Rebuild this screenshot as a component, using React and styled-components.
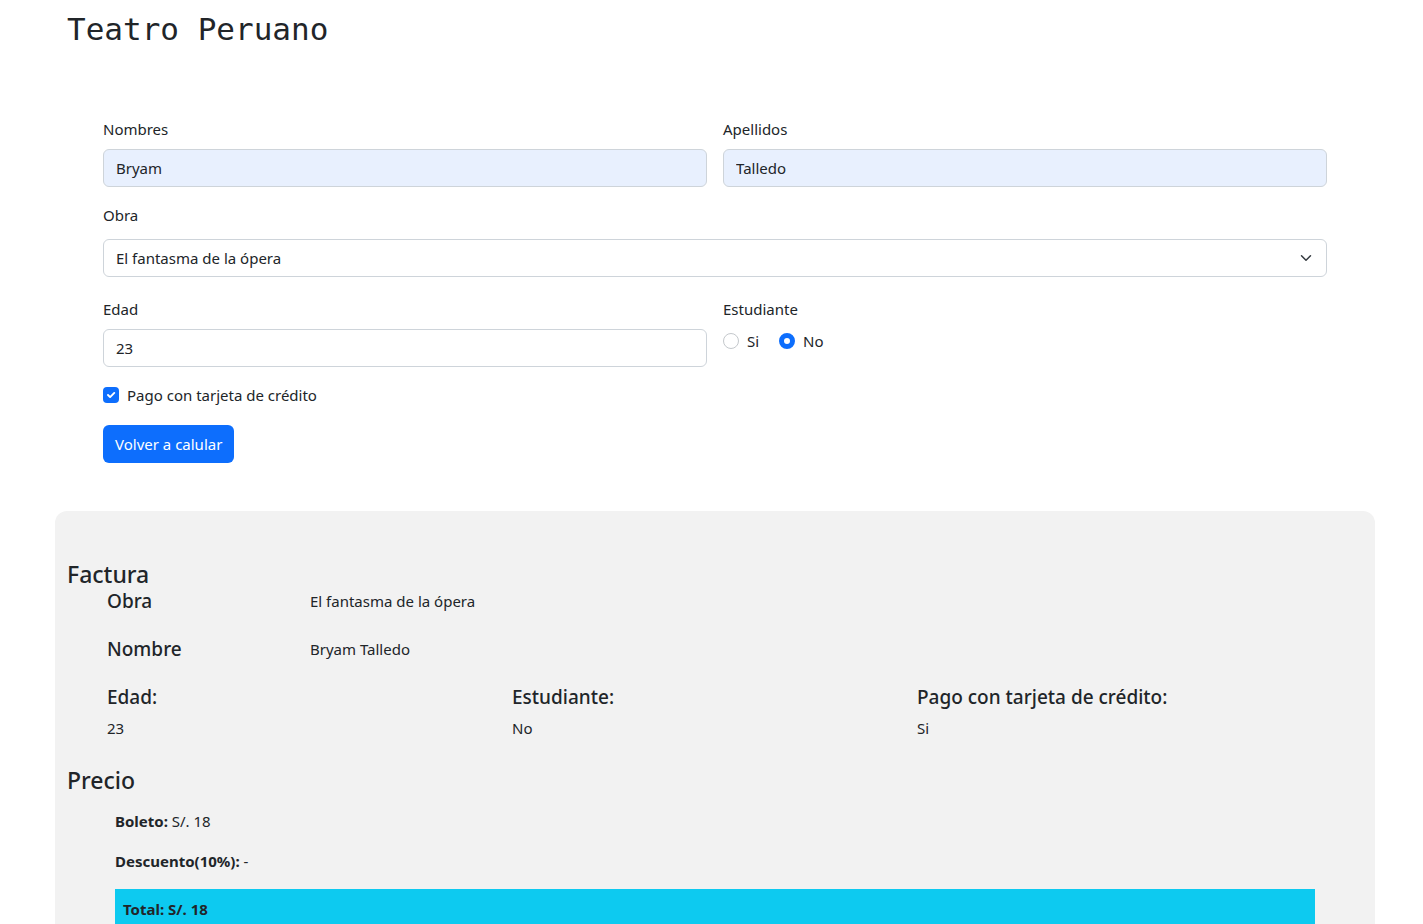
import React, { useState } from 'react'
import styled, { createGlobalStyle } from 'styled-components'

const GlobalStyle = createGlobalStyle`
  body {
    margin: 0;
    background: #fff;
    color: #212529;
    font-family: "Noto Sans", "Open Sans", sans-serif;
    font-size: 15px;
  }
`

const Shell = styled.div`
  padding-left: 7px;
`

const Page = styled.main`
  max-width: 1320px;
  margin: 0 auto;
`

const Title = styled.h1`
  margin: 0;
  padding: 9px 12px 0;
  font-family: "DejaVu Sans Mono", monospace;
  font-weight: 400;
  font-size: 31px;
  line-height: 40px;
`

const Form = styled.form`
  padding: 68px 48px 0;
  display: grid;
  grid-template-columns: 1fr 1fr;
  column-gap: 16px;
  row-gap: 16px;
`

const Field = styled.div`
  grid-column: ${p => (p.wide ? '1 / -1' : 'auto')};
  display: flex;
  flex-direction: column;
  gap: ${p => (p.wide ? '12px' : '8px')};
  margin-bottom: ${p => (p.wide ? '4px' : '0')};
`

const Label = styled.label`
  line-height: 24px;
`

const Input = styled.input`
  box-sizing: border-box;
  height: 38px;
  padding: 0 12px;
  border: 1px solid #ced4da;
  border-radius: 6px;
  font: inherit;
  color: #212529;
  background: ${p => (p.filled ? '#e8f0fe' : '#fff')};
`

const SelectBox = styled.div`
  box-sizing: border-box;
  height: 38px;
  padding: 0 14px 0 12px;
  border: 1px solid #ced4da;
  border-radius: 6px;
  display: flex;
  align-items: center;
  justify-content: space-between;
`

const RadioRow = styled.div`
  display: flex;
  align-items: center;
  gap: 20px;
  height: 24px;
`

const Choice = styled.label`
  display: flex;
  align-items: center;
  gap: 8px;
  line-height: 24px;
`

const Radio = styled.span`
  box-sizing: border-box;
  width: 16px;
  height: 16px;
  border-radius: 50%;
  border: ${p => (p.checked ? '5px solid #0d6efd' : '1px solid #c4c8cc')};
  background: #fff;
`

const CheckRow = styled.label`
  grid-column: 1 / -1;
  display: flex;
  align-items: center;
  gap: 8px;
  line-height: 24px;
`

const CheckBox = styled.span`
  width: 16px;
  height: 16px;
  border-radius: 4px;
  background: #0d6efd;
  display: flex;
  align-items: center;
  justify-content: center;
`

const ButtonRow = styled.div`
  grid-column: 1 / -1;
  margin-top: 2px;
`

const Button = styled.button`
  height: 38px;
  padding: 0 12px;
  border: none;
  border-radius: 6px;
  background: #0d6efd;
  color: #fff;
  font: inherit;
`

const Card = styled.section`
  margin-top: 48px;
  background: #f2f2f2;
  border-radius: 12px;
  padding: 48px 12px 40px;
`

const Heading = styled.h4`
  margin: 0;
  font-size: 23px;
  font-weight: 500;
  line-height: 30px;
`

const InfoRow = styled.div`
  display: grid;
  grid-template-columns: 203px 1fr;
  align-items: center;
  padding-left: 40px;
  height: 24px;
  margin-bottom: 24px;
`

const SubHeading = styled.h5`
  margin: 0;
  font-size: 19px;
  font-weight: 500;
  line-height: 24px;
`

const Columns = styled.div`
  display: grid;
  grid-template-columns: repeat(3, 405px);
  padding-left: 40px;
  margin: 0 0 27px;
`

const Col = styled.div`
  display: flex;
  flex-direction: column;
  gap: 9px;
`

const PriceList = styled.div`
  padding: 14px 48px 0;
  display: flex;
  flex-direction: column;
  gap: 16px;
`

const PriceLine = styled.p`
  margin: 0;
  line-height: 24px;
  b {
    font-weight: 700;
  }
`

const TotalBar = styled.div`
  background: #0dcaf0;
  padding: 8px 8px 12px;
  font-weight: 700;
  line-height: 24px;
`

export default function App() {
  const [student] = useState('no')
  return (
    <Shell>
      <GlobalStyle />
      <Page>
        <Title>Teatro Peruano</Title>
        <Form onSubmit={e => e.preventDefault()}>
          <Field>
            <Label>Nombres</Label>
            <Input filled defaultValue="Bryam" />
          </Field>
          <Field>
            <Label>Apellidos</Label>
            <Input filled defaultValue="Talledo" />
          </Field>
          <Field wide>
            <Label>Obra</Label>
            <SelectBox>
              <span>El fantasma de la ópera</span>
              <svg width="12" height="12" viewBox="0 0 16 16" fill="none" stroke="#343a40" strokeWidth="2" strokeLinecap="round" strokeLinejoin="round">
                <path d="m2 5 6 6 6-6" />
              </svg>
            </SelectBox>
          </Field>
          <Field>
            <Label>Edad</Label>
            <Input defaultValue="23" />
          </Field>
          <Field>
            <Label>Estudiante</Label>
            <RadioRow>
              <Choice><Radio checked={student === 'si'} />Si</Choice>
              <Choice><Radio checked={student === 'no'} />No</Choice>
            </RadioRow>
          </Field>
          <CheckRow>
            <CheckBox>
              <svg width="12" height="12" viewBox="0 0 20 20" fill="none" stroke="#fff" strokeWidth="3.2" strokeLinecap="round" strokeLinejoin="round">
                <path d="m5 10 3.5 3.5 7-7" />
              </svg>
            </CheckBox>
            Pago con tarjeta de crédito
          </CheckRow>
          <ButtonRow>
            <Button type="submit">Volver a calular</Button>
          </ButtonRow>
        </Form>

        <Card>
          <Heading>Factura</Heading>
          <InfoRow>
            <SubHeading>Obra</SubHeading>
            <span>El fantasma de la ópera</span>
          </InfoRow>
          <InfoRow>
            <SubHeading>Nombre</SubHeading>
            <span>Bryam Talledo</span>
          </InfoRow>
          <Columns>
            <Col><SubHeading>Edad:</SubHeading><span>23</span></Col>
            <Col><SubHeading>Estudiante:</SubHeading><span>No</span></Col>
            <Col><SubHeading>Pago con tarjeta de crédito:</SubHeading><span>Si</span></Col>
          </Columns>
          <Heading>Precio</Heading>
          <PriceList>
            <PriceLine><b>Boleto:</b> S/. 18</PriceLine>
            <PriceLine><b>Descuento(10%):</b> -</PriceLine>
            <TotalBar>Total: S/. 18</TotalBar>
          </PriceList>
        </Card>
      </Page>
    </Shell>
  )
}
